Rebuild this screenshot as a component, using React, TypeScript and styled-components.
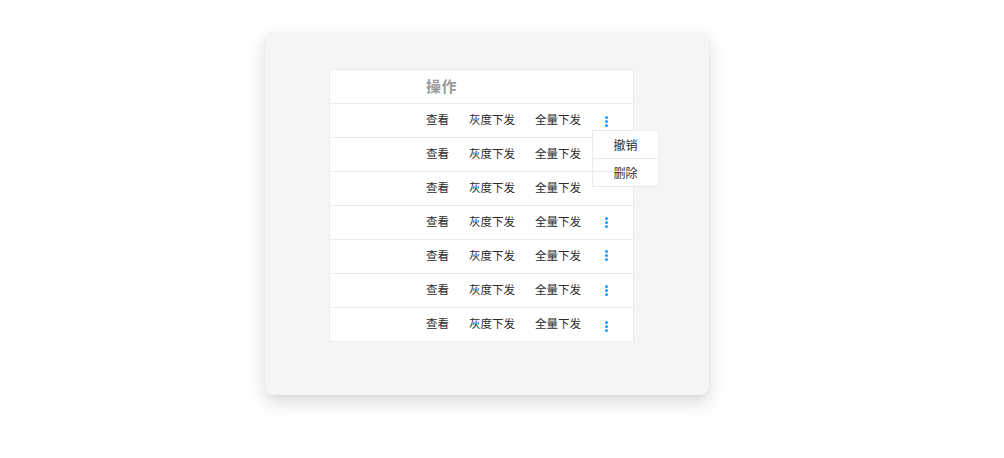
import React from "react";
import styled, { createGlobalStyle } from "styled-components";

const GlobalStyle = createGlobalStyle`
  html, body {
    margin: 0;
    padding: 0;
    background: #ffffff;
    font-family: "Noto Sans CJK SC", "Liberation Sans", sans-serif;
  }
`;

const Page = styled.div`
  width: 1004px;
  height: 458px;
  padding: 32px 0 0 265px;
  box-sizing: border-box;
`;

const Card = styled.div`
  width: 444px;
  height: 363px;
  box-sizing: border-box;
  padding: 37px 0 0 64px;
  background: #f4f5f7;
  border-radius: 8px;
  box-shadow: 0 8px 18px rgba(0, 0, 0, 0.14), 0 1px 3px rgba(0, 0, 0, 0.05);
`;

const Table = styled.div`
  width: 305px;
  box-sizing: border-box;
  background: #ffffff;
  border: 1px solid #ebebeb;
  border-bottom: none;
`;

const Row = styled.div`
  height: 33px;
  border-bottom: 1px solid #ebebeb;
  display: flex;
  align-items: center;
  padding-left: 96px;
  gap: 20px;
  position: relative;
`;

const HeadCell = styled.div`
  font-size: 15px;
  line-height: 1;
  font-weight: 700;
  color: #9a9a9a;
  letter-spacing: 0.5px;
  margin-top: -2px;
`;

const Action = styled.span`
  font-size: 11.5px;
  color: #2b2b2b;
  line-height: 16px;
  margin-top: -3px;
  cursor: pointer;
`;

const More = styled.div<{ $offset: number }>`
  width: 12px;
  height: 16px;
  margin-left: -1px;
  display: flex;
  flex-direction: column;
  align-items: center;
  justify-content: center;
  gap: 1.4px;
  transform: translateY(${(p) => p.$offset}px);
  position: relative;
`;

const Dot = styled.i`
  width: 3px;
  height: 3px;
  border-radius: 50%;
  background: #1e9bff;
`;

const Menu = styled.div`
  position: absolute;
  left: -8px;
  top: 16px;
  width: 67px;
  background: #ffffff;
  border: 1px solid #ebebeb;
  box-sizing: border-box;
  z-index: 2;
`;

const MenuItem = styled.div`
  height: 27px;
  display: flex;
  align-items: center;
  justify-content: center;
  font-size: 12px;
  color: #2b2b2b;
  & + & {
    border-top: 1px solid #ebebeb;
  }
`;

const rows = [
  { more: true, offset: 1, open: true },
  { more: false, offset: 0 },
  { more: false, offset: 0 },
  { more: true, offset: 0 },
  { more: true, offset: -1 },
  { more: true, offset: 0 },
  { more: true, offset: 2 },
];

export default function App() {
  return (
    <>
      <GlobalStyle />
      <Page>
        <Card>
          <Table>
            <Row>
              <HeadCell>操作</HeadCell>
            </Row>
            {rows.map((r, i) => (
              <Row key={i}>
                <Action>查看</Action>
                <Action>灰度下发</Action>
                <Action>全量下发</Action>
                {r.more && (
                  <More $offset={r.offset}>
                    <Dot />
                    <Dot />
                    <Dot />
                    {r.open && (
                      <Menu>
                        <MenuItem>撤销</MenuItem>
                        <MenuItem>删除</MenuItem>
                      </Menu>
                    )}
                  </More>
                )}
              </Row>
            ))}
          </Table>
        </Card>
      </Page>
    </>
  );
}
